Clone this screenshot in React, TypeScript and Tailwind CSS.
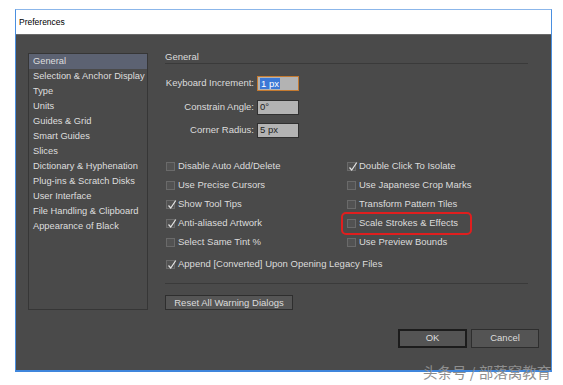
import React from "react";

const font = { fontFamily: '"Liberation Sans", Arial, sans-serif' };

function Check({ checked }: { checked?: boolean }) {
  return (
    <div className="relative w-[9px] h-[9px] shrink-0 bg-[#525252] border border-[#6a6a6a]">
      {checked && (
        <svg className="absolute left-[0px] top-[-2px]" width="10" height="11" viewBox="0 0 10 11">
          <path d="M1.5 6.5 L3.7 9 L8.8 1.5" fill="none" stroke="#e4e4e4" strokeWidth="1.2" />
        </svg>
      )}
    </div>
  );
}

function CB({ label, checked }: { label: string; checked?: boolean }) {
  return (
    <div className="flex items-center h-[19px] gap-[3px] text-[9.5px] text-[#dcdcdc] whitespace-nowrap">
      <Check checked={checked} />
      <span>{label}</span>
    </div>
  );
}

export default function App() {
  const side = [
    "General",
    "Selection & Anchor Display",
    "Type",
    "Units",
    "Guides & Grid",
    "Smart Guides",
    "Slices",
    "Dictionary & Hyphenation",
    "Plug-ins & Scratch Disks",
    "User Interface",
    "File Handling & Clipboard",
    "Appearance of Black",
  ];
  return (
    <div className="relative w-[563px] h-[385px] bg-white overflow-hidden" style={font}>
      <div className="ml-[15px] mt-[9px] w-[537px] h-[363px] flex flex-col border-t border-t-[#8bb6ea] border-x border-x-[#4a8fe0] border-b-2 border-b-[#3f86dc]">
        <div className="h-[25px] bg-white flex items-center pl-[3px] text-[8.5px] text-black border-b border-b-[#6a6a6a]">
          Preferences
        </div>
        <div className="flex-1 bg-[#4a4a4a] flex pl-[12px] pr-[12px] pt-[18px]">
          <div className="w-[120px] h-[257px] border border-[#363636] shrink-0">
            {side.map((s, i) => (
              <div
                key={s}
                className={
                  "h-[15px] leading-[15px] pl-[4px] text-[9.3px] text-[#dedede] whitespace-nowrap " +
                  (i === 0 ? "bg-[#5c6272]" : "")
                }
              >
                {s}
              </div>
            ))}
          </div>
          <div className="ml-[17px] flex-1 flex flex-col -mt-[3px]">
            <div className="h-[13px] leading-[13px] text-[9.5px] text-[#dcdcdc] border-b border-b-[#3a3a3a] w-[363px] box-content">
              General
            </div>
            <div className="flex flex-col gap-[8.5px] mt-[12px] text-[9.5px] text-[#dcdcdc]">
              {[
                ["Keyboard Increment:", "1 px", true],
                ["Constrain Angle:", "0°", false],
                ["Corner Radius:", "5 px", false],
              ].map(([l, v, sel]) => (
                <div key={l as string} className="flex items-center h-[15px]">
                  <div className="w-[89px] text-right whitespace-nowrap">{l}</div>
                  <div
                    className={
                      "ml-[3px] w-[42px] h-[15px] flex items-center pl-[2px] bg-[#b3b3b3] text-[#1e1e1e] border " +
                      (sel ? "border-[#c47a30]" : "border-[#303030]")
                    }
                  >
                    {sel ? <span className="bg-[#3b78d6] text-white px-[1px] leading-[11px]">{v}</span> : <span>{v}</span>}
                  </div>
                </div>
              ))}
            </div>
            <div className="mt-[19px] flex">
              <div className="flex flex-col w-[182px] pl-[1px]">
                <CB label="Disable Auto Add/Delete" />
                <CB label="Use Precise Cursors" />
                <CB label="Show Tool Tips" checked />
                <CB label="Anti-aliased Artwork" checked />
                <CB label="Select Same Tint %" />
              </div>
              <div className="flex flex-col">
                <CB label="Double Click To Isolate" checked />
                <CB label="Use Japanese Crop Marks" />
                <CB label="Transform Pattern Tiles" />
                <div className="relative">
                  <CB label="Scale Strokes & Effects" />
                  <div className="absolute left-[-6px] top-[-2px] w-[131px] h-[23px] border-2 border-[#e01e1e] rounded-[5px]" />
                </div>
                <CB label="Use Preview Bounds" />
              </div>
            </div>
            <div className="mt-[3px] pl-[1px]">
              <CB label="Append [Converted] Upon Opening Legacy Files" checked />
            </div>
            <div className="mt-[9px] h-px bg-[#3a3a3a] w-[363px]" />
            <div className="mt-[11px] flex">
              <button className="w-[128px] h-[15px] bg-[#555555] border border-[#2e2e2e] text-[9.5px] text-[#dcdcdc] leading-[13px]">
                Reset All Warning Dialogs
              </button>
            </div>
            <div className="mt-[19px] flex justify-end gap-[4px]">
              <button className="w-[69px] h-[19px] bg-[#545454] border-2 border-[#1c1c1c] text-[9.5px] text-[#dcdcdc]">
                OK
              </button>
              <button className="w-[68px] h-[19px] bg-[#545454] border border-[#2e2e2e] text-[9.5px] text-[#dcdcdc]">
                Cancel
              </button>
            </div>
          </div>
        </div>
      </div>
      <div
        className="absolute left-[423px] top-[362px] text-[14.5px] leading-[20px] text-[#8e8e8e] whitespace-nowrap"
        style={{ fontFamily: '"Noto Sans CJK SC", sans-serif' }}
      >
        头条号 / 部落窝教育
      </div>
    </div>
  );
}
